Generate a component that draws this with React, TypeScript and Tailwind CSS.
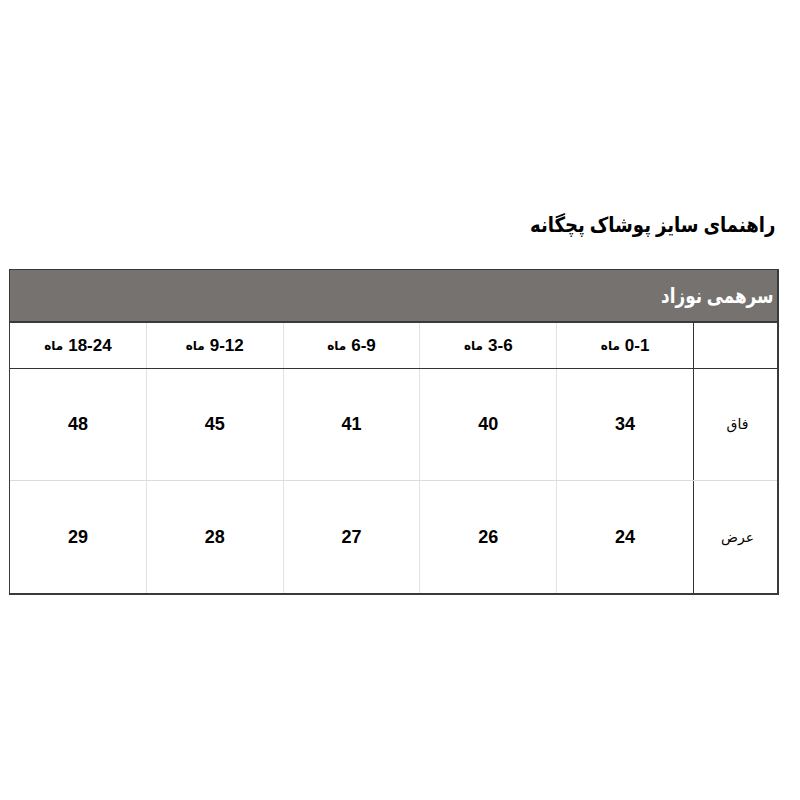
const font = { fontFamily: '"Liberation Sans", "DejaVu Sans", Arial, sans-serif' }

const months = ['0-1', '3-6', '6-9', '9-12', '18-24']

const rows = [
  { label: 'فاق', values: [34, 40, 41, 45, 48] },
  { label: 'عرض', values: [24, 26, 27, 28, 29] },
]

export default function App() {
  return (
    <div className="h-[800px] w-[800px] bg-white pt-[208px]" style={font}>
      {/* page title */}
      <div dir="rtl" className="h-[61px] pr-[25px]">
        <h1 className="inline-block origin-right scale-x-[0.86] text-[21px] font-bold leading-[34px] text-black">
          راهنمای سایز پوشاک پچگانه
        </h1>
      </div>

      {/* size table */}
      <div dir="rtl" className="ml-[9px] w-[770px] border-t border-r-2 border-b-2 border-l border-[#3a3a3a]">
        <div className="flex h-[53px] items-center border-b-2 border-[#3a3a3a] bg-[#767270] pr-[3px]">
          <span className="inline-block origin-right scale-x-[0.8] text-[21px] font-bold text-white">سرهمی نوزاد</span>
        </div>

        <div className="flex h-[46px] border-b border-[#333]">
          <div className="w-[84px] border-l border-[#333]" />
          {months.map((m, i) => (
            <div
              key={m}
              className={`flex flex-1 items-center justify-center gap-[5px] ${i < months.length - 1 ? 'border-l border-[#e2e2e2]' : ''}`}
            >
              <span className="text-[17px] font-bold text-black">{m}</span>
              <span className="text-[12px] font-bold text-black">ماه</span>
            </div>
          ))}
        </div>

        {rows.map((r, ri) => (
          <div key={r.label} className={`flex h-[112px] ${ri === 0 ? 'border-b border-[#dcdcdc]' : ''}`}>
            <div className="flex w-[84px] items-center justify-center border-l border-[#333] pl-[4px]">
              <span className="text-[14px] text-black">{r.label}</span>
            </div>
            {r.values.map((v, i) => (
              <div
                key={i}
                className={`flex flex-1 items-center justify-center ${i < r.values.length - 1 ? 'border-l border-[#e2e2e2]' : ''}`}
              >
                <span className="text-[18px] font-bold text-black">{v}</span>
              </div>
            ))}
          </div>
        ))}
      </div>
    </div>
  )
}
